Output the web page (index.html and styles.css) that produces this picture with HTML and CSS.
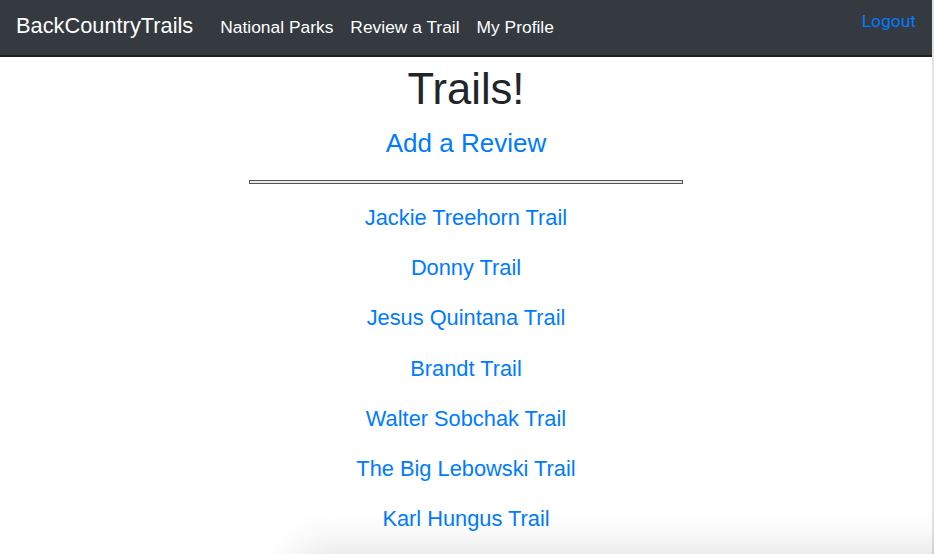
FILE: index.html
```html
<!DOCTYPE html>
<html lang="en">
<head>
<meta charset="utf-8">
<title>BackCountryTrails</title>
<link rel="stylesheet" href="styles.css">
</head>
<body>
<nav class="navbar">
  <a class="brand" href="#">BackCountryTrails</a>
  <ul class="nav-links">
    <li><a href="#">National Parks</a></li>
    <li><a href="#">Review a Trail</a></li>
    <li><a href="#">My Profile</a></li>
  </ul>
  <a class="logout" href="#">Logout</a>
</nav>
<main class="content">
  <h1 class="title">Trails!</h1>
  <a class="add-review" href="#">Add a Review</a>
  <hr class="divider">
  <ul class="trail-list">
    <li><a href="#">Jackie Treehorn Trail</a></li>
    <li><a href="#">Donny Trail</a></li>
    <li><a href="#">Jesus Quintana Trail</a></li>
    <li><a href="#">Brandt Trail</a></li>
    <li><a href="#">Walter Sobchak Trail</a></li>
    <li><a href="#">The Big Lebowski Trail</a></li>
    <li><a href="#">Karl Hungus Trail</a></li>
  </ul>
</main>
</body>
</html>
```
FILE: styles.css
```css
html, body {
  margin: 0;
  padding: 0;
}
body {
  font-family: "Liberation Sans", Arial, sans-serif;
  color: #212529;
  background: #fff;
  height: 554px;
  overflow: hidden;
  border-right: 2px solid #e2e2e2;
  box-sizing: border-box;
}
body::after {
  content: "";
  position: fixed;
  left: 300px;
  right: -60px;
  bottom: -40px;
  height: 40px;
  box-shadow: 0 0 45px rgba(0, 0, 0, 0.16);
  pointer-events: none;
}
a {
  text-decoration: none;
}
.navbar {
  display: flex;
  align-items: flex-start;
  height: 55px;
  background: #343a40;
  border-bottom: 2px solid #1d2124;
  box-sizing: content-box;
  padding: 0 16px 0 16px;
}
.brand {
  color: #fff;
  font-size: 21.8px;
  line-height: 26px;
  margin-top: 13px;
  margin-right: 27px;
}
.nav-links {
  display: flex;
  list-style: none;
  margin: 17px 0 0 0;
  padding: 0;
  gap: 17px;
}
.nav-links a {
  color: #fff;
  font-size: 17.4px;
  line-height: 21px;
}
.logout {
  margin-left: auto;
  margin-top: 11px;
  color: #007bff;
  font-family: Roboto, "Noto Sans", sans-serif;
  font-size: 17.4px;
  line-height: 21px;
}
.content {
  display: flex;
  flex-direction: column;
  align-items: center;
}
.title {
  font-size: 43.5px;
  font-weight: 500;
  line-height: 48px;
  margin: 8px 0 0 0;
}
.add-review {
  color: #007bff;
  font-size: 26px;
  line-height: 28px;
  margin-top: 16px;
}
.divider {
  width: 432px;
  height: 2px;
  margin: 23px 0 0 0;
  border: 1px solid #555;
  background: #e8e8e8;
}
.trail-list {
  list-style: none;
  margin: 22px 0 0 0;
  padding: 0;
  text-align: center;
}
.trail-list li {
  height: 50.2px;
  line-height: 24px;
}
.trail-list a {
  color: #007bff;
  font-size: 21.8px;
}
```
